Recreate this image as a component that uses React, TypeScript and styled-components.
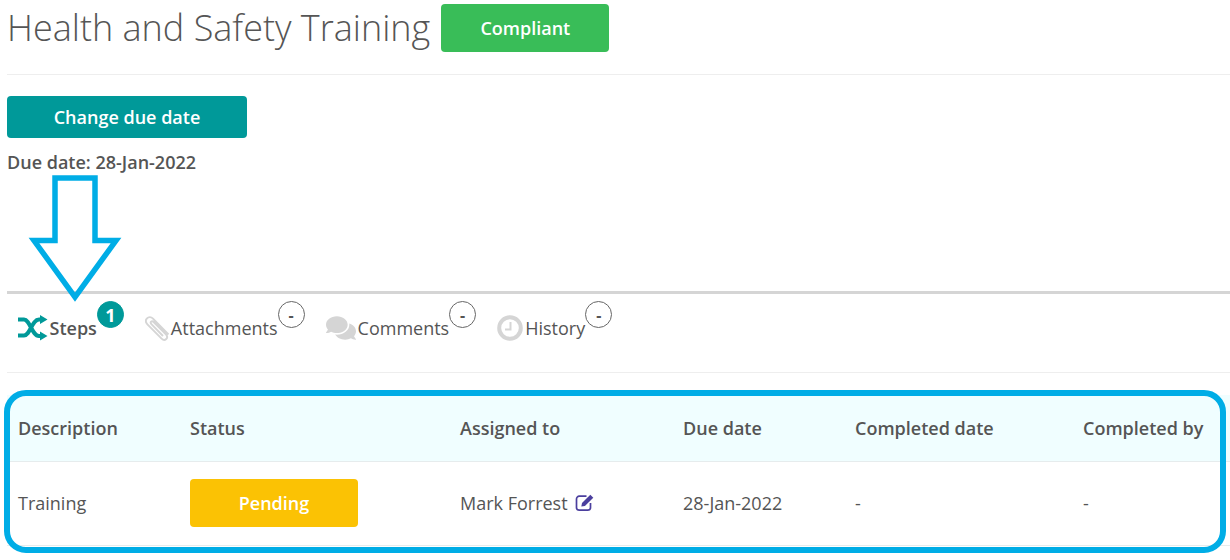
import { FunctionComponent, ReactNode } from 'react';
import styled, { createGlobalStyle } from 'styled-components';
import { FaComments } from 'react-icons/fa';

const GlobalStyle = createGlobalStyle`
	html, body {
		margin: 0;
		padding: 0;
		background: #fff;
	}
	body {
		font-family: 'Open Sans', 'Liberation Sans', sans-serif;
		color: #555;
		overflow: hidden;
	}
`;

const Page = styled.div`
	position: relative;
	width: 1230px;
	height: 560px;
	padding-left: 7px;
	box-sizing: border-box;
`;

const TitleRow = styled.div`
	display: flex;
	align-items: flex-start;
	gap: 11px;
	height: 75px;
	padding-top: 4px;
	box-sizing: border-box;
	border-bottom: 1px solid #eee;
`;

const Title = styled.h1`
	margin: 0;
	font-size: 36px;
	font-weight: 300;
	line-height: 48px;
	color: #555;
`;

const Badge = styled.div<{ $bg: string; $w: number; $h: number }>`
	display: flex;
	align-items: center;
	justify-content: center;
	width: ${({ $w }) => $w}px;
	height: ${({ $h }) => $h}px;
	background: ${({ $bg }) => $bg};
	border-radius: 4px;
	color: #fff;
	font-size: 18px;
	font-weight: 600;
`;

const Actions = styled.div`
	padding-top: 21px;
	height: 216px;
	box-sizing: border-box;
`;

const DueDate = styled.div`
	margin-top: 12px;
	font-size: 18px;
	font-weight: 600;
	line-height: 24px;
	color: #555;
`;

const Arrow = styled.svg`
	position: absolute;
	left: 28px;
	top: 172px;
`;

const Tabs = styled.div`
	display: flex;
	align-items: flex-start;
	height: 82px;
	padding-left: 11px;
	box-sizing: border-box;
	border-top: 3px solid #d5d5d5;
	border-bottom: 1px solid #eee;
`;

const Tab = styled.div<{ $active?: boolean; $last?: boolean }>`
	position: relative;
	display: flex;
	align-items: center;
	height: 24px;
	margin-top: 22px;
	margin-right: ${({ $last }) => ($last ? 0 : 48)}px;
	font-size: 18px;
	font-weight: ${({ $active }) => ($active ? 600 : 400)};
	color: #555;
`;

const TabIcon = styled.span<{ $color: string; $w: number; $size: number }>`
	display: flex;
	width: ${({ $w }) => $w}px;
	font-size: ${({ $size }) => $size}px;
	color: ${({ $color }) => $color};
`;

const Count = styled.span<{ $active?: boolean }>`
	position: absolute;
	left: 100%;
	top: -15px;
	display: flex;
	align-items: center;
	justify-content: center;
	width: 27px;
	height: 27px;
	box-sizing: border-box;
	border-radius: 50%;
	border: 1px solid ${({ $active }) => ($active ? '#009999' : '#666')};
	background: ${({ $active }) => ($active ? '#009999' : '#fff')};
	color: ${({ $active }) => ($active ? '#fff' : '#555')};
	font-size: ${({ $active }) => ($active ? 18 : 16)}px;
	font-weight: 700;
`;

const TableWrap = styled.div`
	margin-top: 22px;
`;

const Row = styled.div<{ $head?: boolean }>`
	display: grid;
	grid-template-columns: 172px 270px 223px 172px 228px 1fr;
	align-items: center;
	height: ${({ $head }) => ($head ? 67 : 84)}px;
	padding-left: 11px;
	padding-bottom: ${({ $head }) => ($head ? 0 : 2)}px;
	box-sizing: border-box;
	background: ${({ $head }) => ($head ? '#f0feff' : '#fff')};
	border-bottom: 1px solid #e6eced;
	font-size: 18px;
	font-weight: ${({ $head }) => ($head ? 600 : 400)};
	color: #555;
`;

const Assignee = styled.div`
	display: flex;
	align-items: center;
	gap: 7px;
`;

const Frame = styled.div`
	position: absolute;
	left: 4px;
	top: 390px;
	width: 1222px;
	height: 163px;
	box-sizing: border-box;
	border: 6px solid #00ade6;
	border-radius: 22px;
	pointer-events: none;
`;

const ShuffleIcon = () => (
	<svg width="30" height="26" viewBox="0 0 30 26">
		<path
			d="M0 4.5H6C12 4.5 14 21 21 21H24M0 20.5H6C12 20.5 14 4.5 21 4.5H24"
			fill="none"
			stroke="#009999"
			strokeWidth="4"
		/>
		<path d="M22 0 29.5 4.5 22 9ZM22 16.5 29.5 21 22 25.5Z" fill="#009999" />
	</svg>
);

const ClipIcon = () => (
	<svg width="26" height="26" viewBox="0 0 26 26">
		<path
			d="M23.5 19.5 8 3.6C6 1.5 3.4 1.8 2 3.3.5 4.9.4 7.2 2.4 9.3L16.6 23.6c1.6 1.6 3.4 1.6 4.6.4 1.3-1.3 1.2-3.1-.3-4.7L8.6 7c-.9-.9-1.9-.9-2.5-.3-.6.7-.6 1.6.3 2.5L18 21"
			fill="none"
			stroke="#d5d5d5"
			strokeWidth="1.9"
		/>
	</svg>
);

const ClockIcon = () => (
	<svg width="26" height="26" viewBox="0 0 26 26">
		<circle cx="13" cy="13" r="10.8" fill="none" stroke="#d5d5d5" strokeWidth="4" />
		<path d="M13.5 7v7.5H8" fill="none" stroke="#d5d5d5" strokeWidth="2" />
	</svg>
);

const EditIcon = () => (
	<svg width="19" height="18" viewBox="0 0 19 18">
		<path
			d="M11.5 2.2H4.3A2.8 2.8 0 0 0 1.5 5v8.4a2.8 2.8 0 0 0 2.8 2.8h8.4a2.8 2.8 0 0 0 2.8-2.8V9"
			fill="none"
			stroke="#4b3f9e"
			strokeWidth="1.7"
		/>
		<path d="M6.3 12.6l.7-3.6L15.3.8l3 3-8.4 8.2z" fill="#4b3f9e" />
	</svg>
);

interface TabItemProps {
	icon: ReactNode;
	label: string;
	count: string;
	iconWidth: number;
	iconSize?: number;
	color?: string;
	active?: boolean;
	last?: boolean;
}

const TabItem: FunctionComponent<TabItemProps> = ({
	icon,
	label,
	count,
	iconWidth,
	iconSize = 30,
	color = '#d5d5d5',
	active,
	last,
}) => (
	<Tab $active={active} $last={last}>
		<TabIcon $color={color} $w={iconWidth} $size={iconSize}>
			{icon}
		</TabIcon>
		{label}
		<Count $active={active}>{count}</Count>
	</Tab>
);

const App: FunctionComponent = () => (
	<Page>
		<GlobalStyle />
		<TitleRow>
			<Title>Health and Safety Training</Title>
			<Badge $bg="#39bd58" $w={168} $h={48}>
				Compliant
			</Badge>
		</TitleRow>
		<Actions>
			<Badge $bg="#009999" $w={240} $h={42}>
				Change due date
			</Badge>
			<DueDate>Due date: 28-Jan-2022</DueDate>
		</Actions>
		<Arrow width="96" height="132" viewBox="0 0 96 132">
			<path d="M27 6H67V68.5H88L47 125L6 68.5H27Z" fill="none" stroke="#00ade6" strokeWidth="5.5" />
		</Arrow>
		<Tabs>
			<TabItem icon={<ShuffleIcon />} label="Steps" count="1" iconWidth={31.5} color="#009999" active />
			<TabItem icon={<ClipIcon />} label="Attachments" count="-" iconWidth={26} />
			<TabItem icon={<FaComments />} label="Comments" count="-" iconWidth={32} />
			<TabItem icon={<ClockIcon />} label="History" count="-" iconWidth={28} last />
		</Tabs>
		<TableWrap>
			<Row $head>
				<div>Description</div>
				<div>Status</div>
				<div>Assigned to</div>
				<div>Due date</div>
				<div>Completed date</div>
				<div>Completed by</div>
			</Row>
			<Row>
				<div>Training</div>
				<div>
					<Badge $bg="#fbc204" $w={168} $h={48}>
						Pending
					</Badge>
				</div>
				<Assignee>
					Mark Forrest <EditIcon />
				</Assignee>
				<div>28-Jan-2022</div>
				<div>-</div>
				<div>-</div>
			</Row>
		</TableWrap>
		<Frame />
	</Page>
);

export default App;
